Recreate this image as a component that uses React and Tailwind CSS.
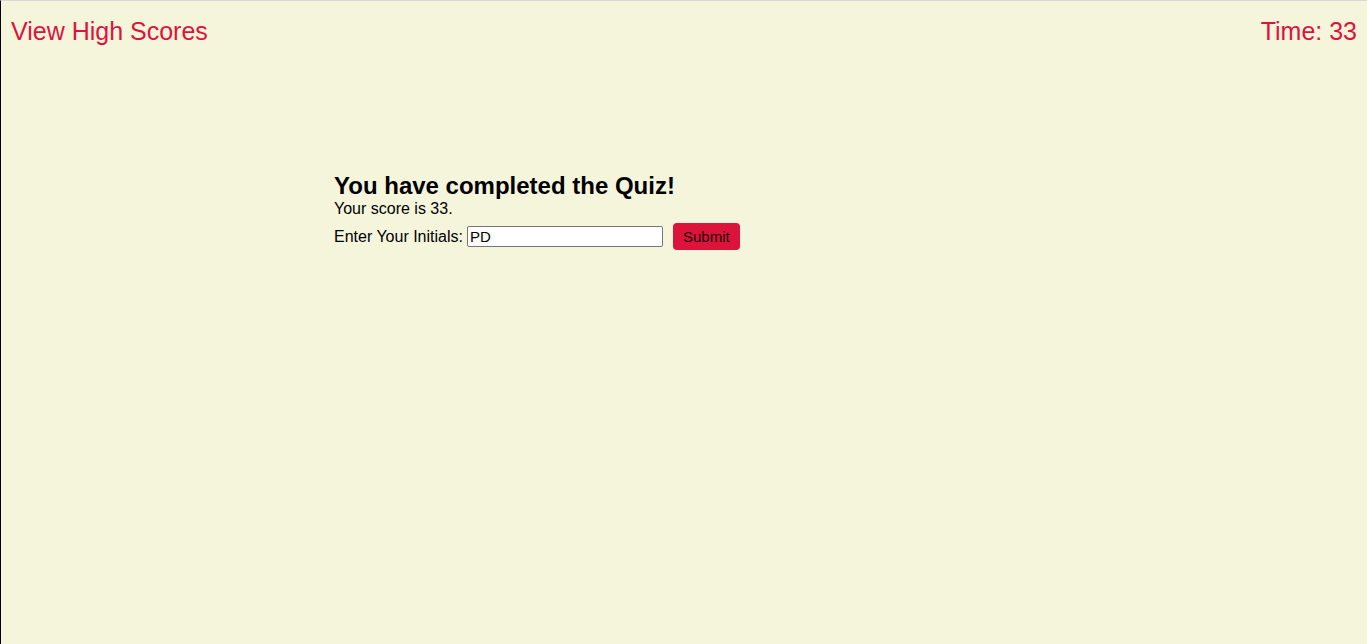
export default function App() {
  return (
    <div
      className="min-h-[644px] bg-[#f5f5dc] border-l border-l-black border-t border-t-[#d8d8d8] text-black"
      style={{ fontFamily: '"Liberation Sans", Arial, sans-serif' }}
    >
      <header className="flex justify-between items-start px-[10px] pt-[16px] text-[25px] leading-[29px] text-[#dc143c]">
        <a className="cursor-pointer">View High Scores</a>
        <span>Time: 33</span>
      </header>
      <main className="mx-auto w-[700px] mt-[126px]">
        <h2 className="text-[24px] font-bold leading-[28px]">You have completed the Quiz!</h2>
        <p className="text-[16px] leading-[18px]">Your score is 33.</p>
        <div className="flex items-center mt-[4px] h-[28px] text-[16px]">
          <label className="mr-[4px] pt-[1px]">Enter Your Initials:</label>
          <input
            defaultValue="PD"
            className="w-[196px] h-[21px] border border-[#767676] rounded-[2px] bg-white px-[2px] text-[15px] leading-[18px] text-black outline-none"
            style={{ fontFamily: '"Liberation Sans", Arial, sans-serif' }}
          />
          <button className="ml-[10px] h-[27px] px-[10px] rounded-[4px] bg-[#dc143c] text-[15px] leading-[17px] text-[#1a0006]">
            Submit
          </button>
        </div>
      </main>
    </div>
  );
}
